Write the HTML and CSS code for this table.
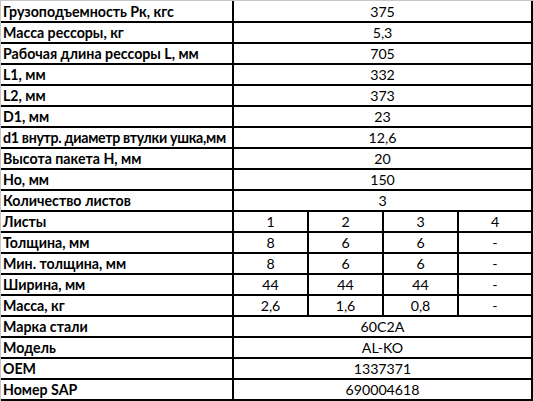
FILE: index.html
```html
<!DOCTYPE html>
<html lang="ru">
<head>
<meta charset="utf-8">
<title>Рессора</title>
<link rel="stylesheet" href="styles.css">
</head>
<body>
<div class="sheet">
  <div class="lbl">Грузоподъемность Рк, кгс</div><div class="val wide">375</div>
  <div class="lbl">Масса рессоры, кг</div><div class="val wide">5,3</div>
  <div class="lbl">Рабочая длина рессоры L, мм</div><div class="val wide">705</div>
  <div class="lbl">L1, мм</div><div class="val wide">332</div>
  <div class="lbl">L2, мм</div><div class="val wide">373</div>
  <div class="lbl">D1, мм</div><div class="val wide">23</div>
  <div class="lbl tight">d1 внутр. диаметр втулки ушка,мм</div><div class="val wide">12,6</div>
  <div class="lbl">Высота пакета H, мм</div><div class="val wide">20</div>
  <div class="lbl">Но, мм</div><div class="val wide">150</div>
  <div class="lbl">Количество листов</div><div class="val wide">3</div>
  <div class="lbl">Листы</div><div class="val">1</div><div class="val">2</div><div class="val">3</div><div class="val">4</div>
  <div class="lbl">Толщина, мм</div><div class="val">8</div><div class="val">6</div><div class="val">6</div><div class="val">-</div>
  <div class="lbl">Мин. толщина, мм</div><div class="val">8</div><div class="val">6</div><div class="val">6</div><div class="val">-</div>
  <div class="lbl">Ширина, мм</div><div class="val">44</div><div class="val">44</div><div class="val">44</div><div class="val">-</div>
  <div class="lbl">Масса, кг</div><div class="val">2,6</div><div class="val">1,6</div><div class="val">0,8</div><div class="val">-</div>
  <div class="lbl">Марка стали</div><div class="val wide">60C2A</div>
  <div class="lbl">Модель</div><div class="val wide">AL-KO</div>
  <div class="lbl">OEM</div><div class="val wide">1337371</div>
  <div class="lbl">Номер SAP</div><div class="val wide">690004618</div>
</div>
</body>
</html>
```
FILE: styles.css
```css
html, body {
  margin: 0;
  padding: 0;
  background: #fff;
}
.sheet {
  width: 531px;
  display: grid;
  grid-template-columns: 231px 73px 73px 73px 72px;
  grid-template-rows: 20px repeat(18, 19px);
  gap: 2px;
  background: #000;
  border-top: 1px solid #c8c8c8;
  border-left: 1px solid #c8c8c8;
  padding: 0 2px 2px 0;
  font-family: Lato, "Open Sans", sans-serif;
  font-size: 14.2px;
  color: #000;
}
.lbl, .val {
  background: #fff;
  display: flex;
  align-items: flex-end;
  line-height: 18px;
  white-space: nowrap;
  overflow: hidden;
}
.lbl {
  font-weight: bold;
  padding-left: 2px;
}
.tight {
  letter-spacing: -0.3px;
}
.val {
  justify-content: center;
}
.wide {
  grid-column: span 4;
}
```
